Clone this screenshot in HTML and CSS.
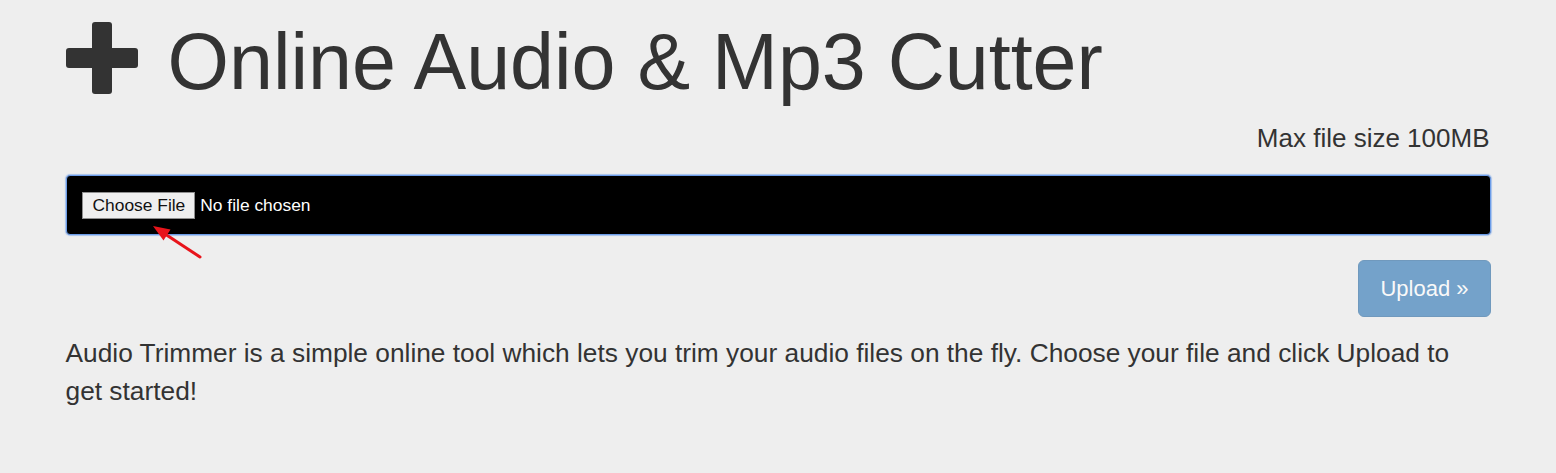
FILE: index.html
```html
<!DOCTYPE html>
<html lang="en">
<head>
  <meta charset="UTF-8" />
  <meta name="viewport" content="width=device-width, initial-scale=1.0" />
  <title>Online Audio &amp; Mp3 Cutter</title>
  <link rel="stylesheet" href="styles.css">
</head>
<body>
  <div class="container">
    <!-- Heading -->
    <h1 class="title">
      <svg class="plus-icon" viewBox="0 0 72 72" width="72" height="72">
        <rect x="26" y="0" width="20" height="72" rx="3" />
        <rect x="0" y="26" width="72" height="20" rx="3" />
      </svg>
      <span>Online Audio &amp; Mp3 Cutter</span>
    </h1>

    <form class="upload-form">
      <div class="size-note">Max file size 100MB</div>
      <input class="file-input" type="file" name="file" />
      <div class="actions">
        <button class="btn-upload" type="submit" disabled>Upload &raquo;</button>
      </div>
    </form>

    <p class="intro">Audio Trimmer is a simple online tool which lets you trim your audio files on the fly. Choose your file and click Upload to get started!</p>

    <!-- Red pointer arrow drawn over the page -->
    <svg class="pointer" width="60" height="45" viewBox="145 220 60 45">
      <line x1="200" y1="257" x2="162" y2="232" stroke="#e8141b" stroke-width="3" stroke-linecap="round" />
      <polygon points="153,226 170.5,229.5 163.5,240.5" fill="#e8141b" />
    </svg>
  </div>
</body>
</html>
```

FILE: styles.css
```css
/* Basic Reset */
* {
  margin: 0;
  padding: 0;
  box-sizing: border-box;
}

body {
  font-family: "Liberation Sans", Arial, sans-serif;
  background-color: #eeeeee;
  color: #333333;
  font-size: 26px;
  line-height: 1.42857;
}

.container {
  position: relative;
  width: 1425px;
  margin: 0 auto;
  padding-top: 19px;
}

/* Heading */
.title {
  display: flex;
  align-items: center;
  gap: 30px;
  font-size: 79px;
  font-weight: normal;
  line-height: 86px;
}

.plus-icon {
  fill: #333333;
  flex-shrink: 0;
  margin-top: -8px;
}

/* Upload form */
.size-note {
  margin-top: 15px;
  text-align: right;
  padding-right: 1px;
}

.file-input {
  display: block;
  width: 100%;
  height: 60px;
  margin-top: 18px;
  padding: 0 15px;
  background-color: #000000;
  color: #ffffff;
  border: 1px solid #6d9de8;
  border-radius: 4px;
  box-shadow: 0 0 1px 1px rgba(120, 165, 235, 0.6); /* focus glow */
  font-family: "Liberation Sans", Arial, sans-serif;
  font-size: 17.4px;
  line-height: 58px;
}

.file-input::file-selector-button {
  height: 27px;
  margin-right: 5px;
  padding: 0 9px 0 10px;
  background-color: #efefef;
  color: #111111;
  border: 1px solid #8f8f8f;
  border-radius: 0;
  font-family: "Liberation Sans", Arial, sans-serif;
  font-size: 17.4px;
}

.actions {
  display: flex;
  justify-content: flex-end;
  margin-top: 25px;
}

.btn-upload {
  height: 57px;
  padding: 0 21px;
  background-color: #337ab7;
  color: #ffffff;
  border: 1px solid #2e6da4;
  border-radius: 6px;
  opacity: 0.65;
  font-family: "Liberation Sans", Arial, sans-serif;
  font-size: 22px;
}

/* Intro paragraph */
.intro {
  margin-top: 18px;
  padding-right: 30px;
  font-size: 26.3px;
}

/* Pointer arrow */
.pointer {
  position: absolute;
  left: 79px;
  top: 220px;
}
```
